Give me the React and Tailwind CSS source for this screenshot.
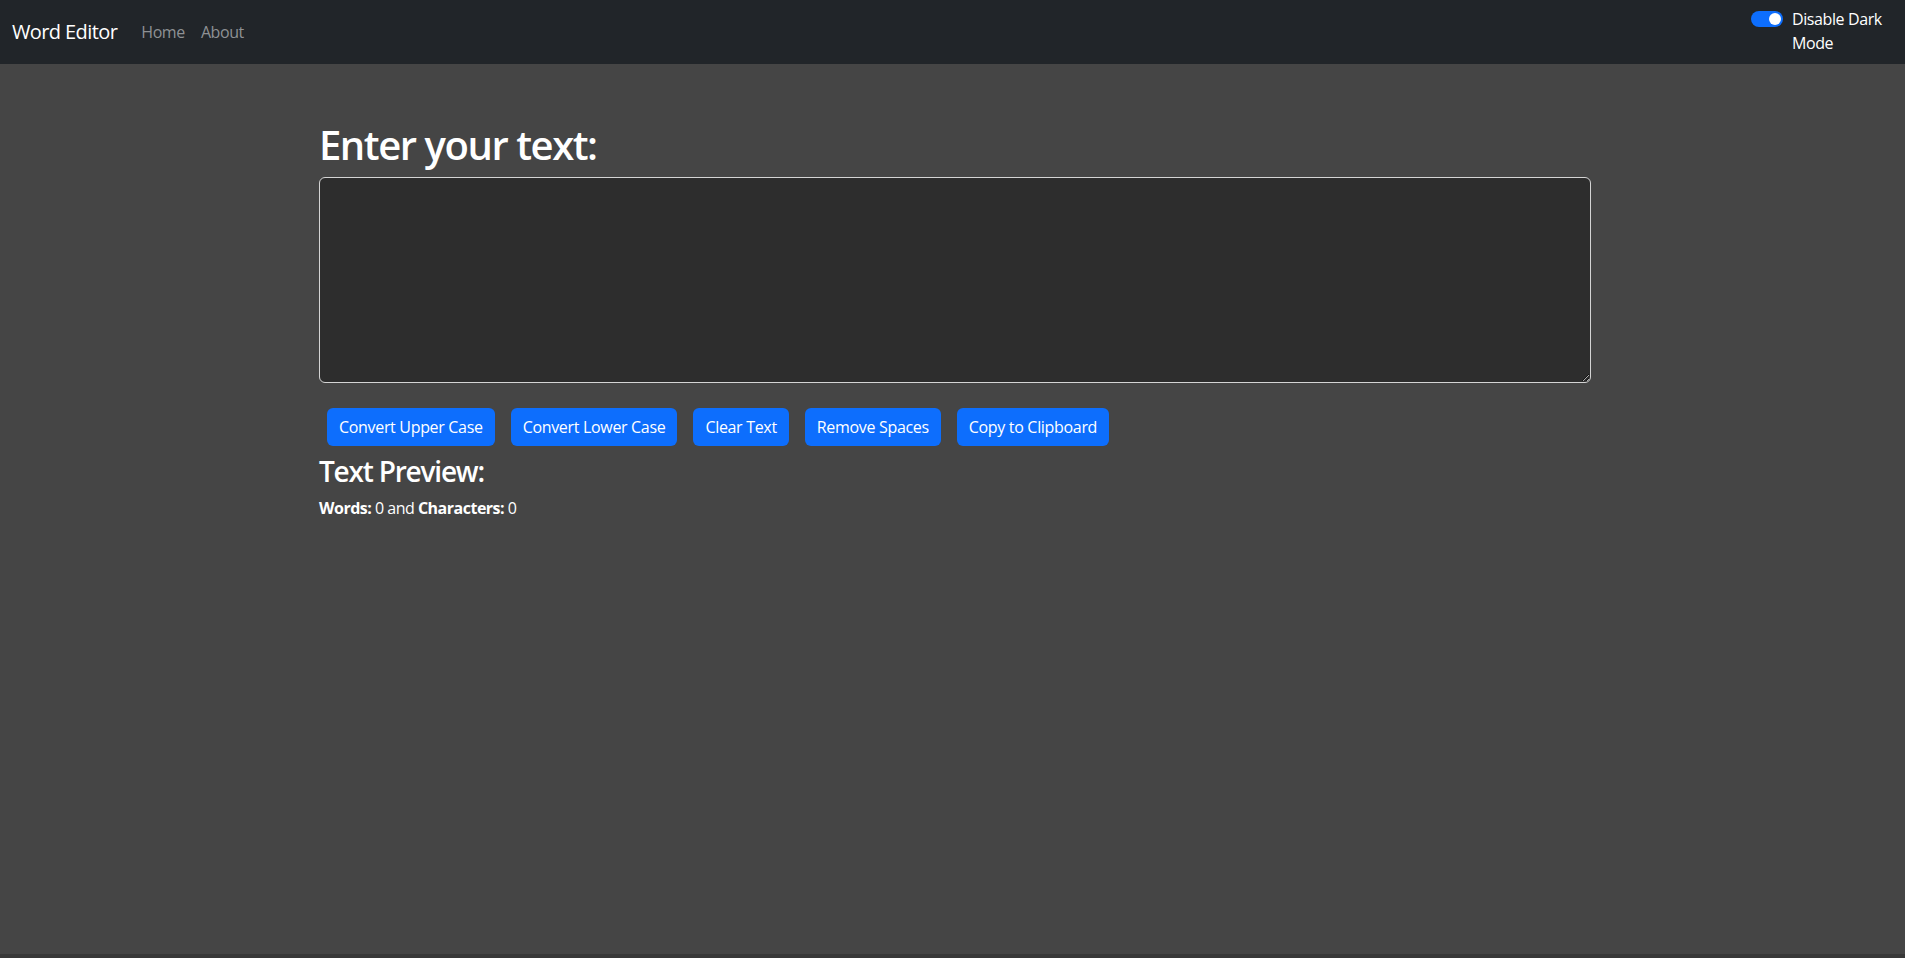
import React, { useState } from 'react';

const buttons = ['Convert Upper Case', 'Convert Lower Case', 'Clear Text', 'Remove Spaces', 'Copy to Clipboard'];

const Navbar = () => (
  <nav className="h-16 bg-[#212529] px-3 flex items-center justify-between">
    <div className="flex items-center">
      <a href="#" className="text-[20px] leading-[30px] tracking-[-0.6px] text-white mr-4">Word Editor</a>
      <a href="#" className="px-2 text-base leading-6 tracking-[-0.4px] text-[#8e9194]">Home</a>
      <a href="#" className="px-2 text-base leading-6 tracking-[-0.4px] text-[#8e9194]">About</a>
    </div>
    <div className="flex items-start w-[142px] -mt-[3px]">
      <div className="mt-[4px] w-8 h-4 rounded-full bg-[#0d6efd] flex items-center justify-end pr-[2px] shrink-0">
        <div className="w-3 h-3 rounded-full bg-white"></div>
      </div>
      <label className="ml-[9px] text-base leading-6 tracking-[-0.4px] text-white">
        <span className="block">Disable Dark</span>
        <span className="block">Mode</span>
      </label>
    </div>
  </nav>
);

export default function App() {
  const [text, setText] = useState('');
  const words = text.split(/\s+/).filter((w) => w.length > 0).length;

  return (
    <div className="min-h-[958px] bg-[#383838] font-['Open_Sans',sans-serif] text-white">
      <Navbar />
      <main className="h-[890px] bg-[#454545]">
        <div className="mx-auto w-[1277px] pl-[5px] pt-[57px]">
          <h1 className="text-[40px] leading-[48px] font-semibold tracking-[-1.45px] mb-2">Enter your text:</h1>
          <textarea
            value={text}
            onChange={(e) => setText(e.target.value)}
            className="block w-full h-[206px] rounded-md border border-[#d4d4d4] bg-[#2d2d2d] px-3 py-[6px] text-base leading-6 text-white outline-none"
          ></textarea>
          <div className="flex gap-4 ml-2 mt-[25px]">
            {buttons.map((b) => (
              <button key={b} className="h-[38px] px-3 rounded-md bg-[#0d6efd] text-white text-base leading-6 tracking-[-0.32px]">
                {b}
              </button>
            ))}
          </div>
          <h3 className="mt-2 text-[28px] leading-[34px] font-semibold tracking-[-1.2px] mb-2">Text Preview:</h3>
          <p className="text-base leading-6 tracking-[-0.5px]">
            <b>Words:</b> {words} and <b>Characters:</b> {text.length}
          </p>
        </div>
      </main>
    </div>
  );
}
